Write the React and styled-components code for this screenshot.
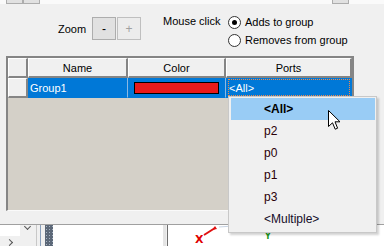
import React from 'react';
import styled, { createGlobalStyle } from 'styled-components';

const Global = createGlobalStyle`
  html, body { margin: 0; padding: 0; background: #f0f0f0; overflow: hidden; }
  body { font-family: "Liberation Sans", Arial, sans-serif; font-size: 11px; color: #000; }
  * { box-sizing: border-box; }
`;

const Screen = styled.div`
  position: relative;
  width: 384px;
  height: 246px;
  display: flex;
  flex-direction: column;
  overflow: hidden;
  background: #f0f0f0;
`;

const TopStrip = styled.div`
  height: 4px;
  background: #fafafa;
  display: flex;
  justify-content: space-between;
  padding: 0 35px 0 6px;
`;

const StubGroup = styled.div`
  display: flex;
`;

const Stub = styled.div`
  width: 17px;
  height: 4px;
  background: #e1e1e1;
  border: 1px solid #adadad;
  border-top: none;
`;

const Controls = styled.div`
  height: 52px;
  display: flex;
  align-items: flex-start;
  padding-left: 58px;
`;

const ZoomGroup = styled.div`
  display: flex;
  align-items: center;
  margin-top: 13px;
`;

const Label = styled.span`
  line-height: 14px;
  white-space: nowrap;
`;

const ZoomLabel = styled(Label)`
  width: 34px;
`;

const SmallButton = styled.button`
  width: 24px;
  height: 23px;
  margin: 0 1px 0 0;
  padding: 0;
  font-family: inherit;
  font-size: 12px;
  line-height: 1;
  background: ${p => (p.disabled ? '#ececec' : '#e1e1e1')};
  border: 1px solid ${p => (p.disabled ? '#bfbfbf' : '#adadad')};
  color: ${p => (p.disabled ? '#a0a0a0' : '#000')};
  display: flex;
  align-items: center;
  justify-content: center;
`;

const MouseGroup = styled.div`
  display: flex;
  align-items: flex-start;
  margin-left: 21px;
  margin-top: 9px;
`;

const MouseLabel = styled(Label)`
  width: 65px;
  padding-top: 1px;
`;

const RadioList = styled.div`
  display: flex;
  flex-direction: column;
`;

const RadioRow = styled.div`
  height: 18px;
  display: flex;
  align-items: center;
  gap: 4px;
`;

const RadioCircle = styled.span`
  width: 13px;
  height: 13px;
  border-radius: 50%;
  border: 1px solid #333;
  background: #fff;
  display: flex;
  align-items: center;
  justify-content: center;
  &::after {
    content: '';
    width: 5px;
    height: 5px;
    border-radius: 50%;
    background: ${p => (p.checked ? '#000' : 'transparent')};
  }
`;

const GridFrame = styled.div`
  margin-left: 6px;
  width: 348px;
  height: 155px;
  background: #d4d0c8;
  border-left: 2px solid #858585;
  border-top: 2px solid #858585;
  border-right: 2px solid #858585;
  border-bottom: 1px solid #fafafa;
  display: grid;
  grid-template-columns: 20px 100px 98px 1fr;
  grid-template-rows: 20px 20px;
  align-content: start;
`;

const HeadCell = styled.div`
  background: #f0f0f0;
  border-top: 1px solid #fff;
  border-left: 1px solid #fff;
  border-right: 2px solid #858585;
  border-bottom: 2px solid #858585;
  display: flex;
  align-items: center;
  justify-content: center;
  line-height: 14px;
`;

const DataCell = styled.div`
  background: #0078d7;
  color: #fff;
  border-right: 1px solid ${p => (p.$last ? '#0078d7' : '#8ab8e4')};
  border-bottom: 1px solid #0078d7;
  display: flex;
  align-items: center;
  padding: ${p => p.$pad || '0 0 0 2px'};
  line-height: 14px;
`;

const ColorSwatch = styled.div`
  width: 85px;
  height: 12px;
  background: ${p => p.$color};
  border: 1px solid #000;
`;

const EditBox = styled.div`
  flex: 1;
  height: 17px;
  border: 1px dotted #f08a4b;
  display: flex;
  align-items: center;
  padding-left: 0;
`;

const Spacer = styled.div`
  height: 13px;
`;

const Bottom = styled.div`
  flex: 1;
  display: flex;
  border-top: 1px solid #a0a0a0;
`;

const LeftPane = styled.div`
  position: relative;
  width: 36px;
  background: #f0f0f0;
`;

const ComboBox = styled.div`
  width: 20px;
  height: 11px;
  background: #fff;
`;

const Chevron = styled.span`
  position: absolute;
  left: ${p => p.$x}px;
  top: ${p => p.$y}px;
  width: 5px;
  height: 5px;
  border-right: 1.5px solid #555;
  border-bottom: 1.5px solid #555;
  transform: rotate(${p => p.$rot}deg);
`;

const VLine = styled.div`
  width: ${p => p.$w || 1}px;
  background: ${p => p.$c};
`;

const Gap = styled.div`
  width: ${p => p.$w}px;
  background: #f0f0f0;
`;

const Splitter = styled.div`
  width: 8px;
  background-color: #5c6878;
  background-image: radial-gradient(#a8b4c4 0.8px, transparent 0.9px);
  background-size: 3px 3px;
`;

const WhitePane = styled.div`
  width: ${p => p.$w}px;
  background: #fff;
`;

const Canvas = styled.div`
  position: relative;
  flex: 1;
  background: #fff;
`;

const AxisLabel = styled.span`
  position: absolute;
  left: ${p => p.$x}px;
  top: ${p => p.$y}px;
  font-family: "DejaVu Sans", sans-serif;
  font-weight: bold;
  font-size: ${p => p.$size}px;
  color: ${p => p.$c};
  line-height: 1;
`;

const ArrowSvg = styled.svg`
  position: absolute;
  left: 35px;
  top: 0;
`;

const Dropdown = styled.div`
  position: absolute;
  left: 228px;
  top: 96px;
  width: 149px;
  height: 137px;
  background: #f0f0f0;
  border: 1px solid #c8c8c8;
  box-shadow: 2px 2px 2px rgba(0, 0, 0, 0.18);
  padding: 1px 1px 1px 2px;
  display: flex;
  flex-direction: column;
`;

const Item = styled.div`
  height: 22px;
  width: 144px;
  padding-left: 33px;
  display: flex;
  align-items: center;
  background: ${p => (p.$active ? '#99ccf5' : 'transparent')};
  font-weight: ${p => (p.$active ? 'bold' : 'normal')};
  color: ${p => p.$c || '#000'};
  font-size: 12px;
`;

const Cursor = styled.svg`
  position: absolute;
  left: 328px;
  top: 110px;
`;

const items = [
  { label: '<All>', active: true, c: '#000' },
  { label: 'p2', c: '#2a0008' },
  { label: 'p0', c: '#2a0008' },
  { label: 'p1', c: '#2a0008' },
  { label: 'p3', c: '#2a0008' },
  { label: '<Multiple>', c: '#140c28' },
];

export default function App() {
  return (
    <Screen>
      <Global />
      <TopStrip>
        <StubGroup>
          <Stub />
          <Stub />
        </StubGroup>
        <StubGroup>
          <Stub />
        </StubGroup>
      </TopStrip>

      <Controls>
        <ZoomGroup>
          <ZoomLabel>Zoom</ZoomLabel>
          <SmallButton>-</SmallButton>
          <SmallButton disabled>+</SmallButton>
        </ZoomGroup>
        <MouseGroup>
          <MouseLabel>Mouse click</MouseLabel>
          <RadioList>
            <RadioRow>
              <RadioCircle checked />
              <Label>Adds to group</Label>
            </RadioRow>
            <RadioRow>
              <RadioCircle />
              <Label>Removes from group</Label>
            </RadioRow>
          </RadioList>
        </MouseGroup>
      </Controls>

      <GridFrame>
        <HeadCell />
        <HeadCell>Name</HeadCell>
        <HeadCell>Color</HeadCell>
        <HeadCell>Ports</HeadCell>
        <HeadCell />
        <DataCell>Group1</DataCell>
        <DataCell $pad="0 0 0 6px">
          <ColorSwatch $color="#e81a1a" />
        </DataCell>
        <DataCell $last $pad="1px 1px 1px 2px">
          <EditBox>&lt;All&gt;</EditBox>
        </DataCell>
      </GridFrame>

      <Spacer />

      <Bottom>
        <LeftPane>
          <ComboBox />
          <Chevron $x={25} $y={-1} $rot={45} />
          <Chevron $x={7} $y={15} $rot={-45} />
        </LeftPane>
        <VLine $c="#c8c8c8" />
        <Gap $w={3} />
        <VLine $c="#8aa0bc" />
        <Gap $w={4} />
        <Splitter />
        <WhitePane $w={110} />
        <VLine $w={3} $c="#e4e4e4" />
        <Gap $w={1} />
        <VLine $c="#6e6e6e" />
        <Canvas>
          <AxisLabel $x={27} $y={9} $size={11} $c="#e00000">X</AxisLabel>
          <ArrowSvg width="40" height="14" viewBox="0 0 40 14">
            <line x1="1" y1="10" x2="12" y2="3" stroke="#e01010" strokeWidth="2" />
            <path d="M12 1 L14 4 L9 5 Z" fill="#e01010" />
            <line x1="16" y1="2" x2="30" y2="1" stroke="#c8d4e4" strokeWidth="1" />
          </ArrowSvg>
          <AxisLabel $x={97} $y={8} $size={8} $c="#1a9a1a">Y</AxisLabel>
        </Canvas>
      </Bottom>

      <Dropdown>
        {items.map(it => (
          <Item key={it.label} $active={it.active} $c={it.c}>
            {it.label}
          </Item>
        ))}
      </Dropdown>

      <Cursor width="14" height="21" viewBox="0 0 14 21">
        <path
          d="M0.5 0.5 L0.5 16.5 L4.5 12.8 L7.2 19.2 L9.6 18.2 L7 11.8 L12 11.8 Z"
          fill="#fff"
          stroke="#000"
          strokeWidth="1"
          strokeLinejoin="miter"
        />
      </Cursor>
    </Screen>
  );
}
